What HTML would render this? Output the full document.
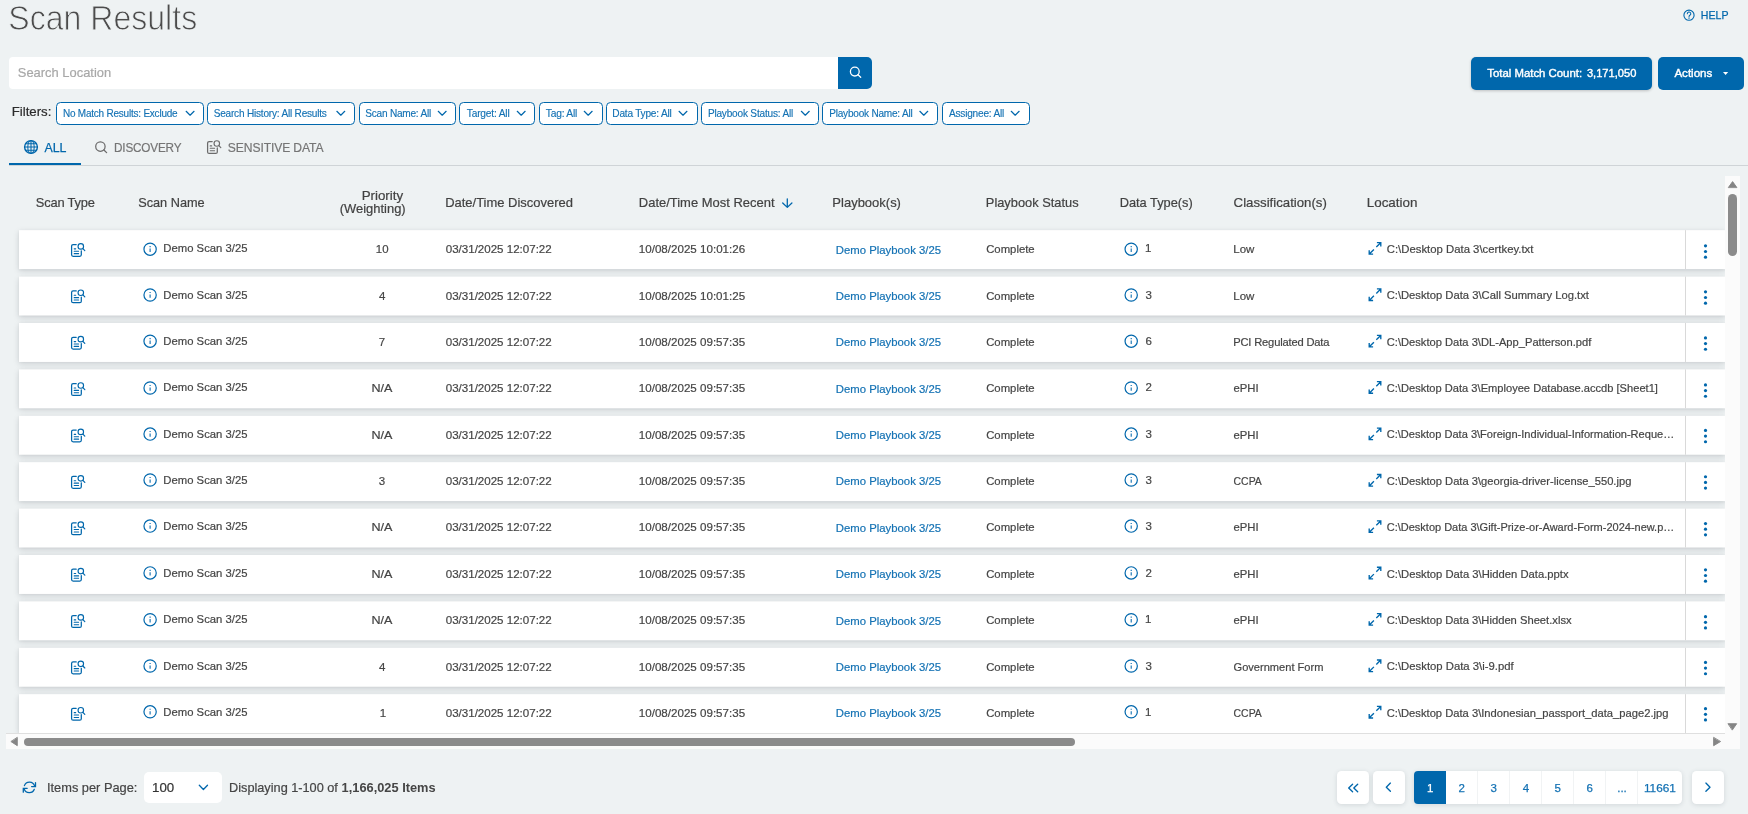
<!DOCTYPE html>
<html lang="en"><head><meta charset="utf-8"><title>Scan Results</title>
<style>
html,body{margin:0;padding:0;background:#eef2f3;}
body{width:1748px;height:814px;overflow:hidden;font-family:"Liberation Sans",sans-serif;color:#454545;}
#app{will-change:transform;position:relative;width:1748px;height:814px;overflow:hidden;background:#eef2f3;}
#app>*{position:absolute;box-sizing:border-box;}
.t{white-space:pre;line-height:20px;height:20px;transform-origin:0 50%;-webkit-text-stroke:0.2px currentColor;}
.row{background:#fff;box-shadow:0 2px 6px rgba(20,30,40,.15),0 0.5px 2px rgba(20,30,40,.06);}
.row>i{position:absolute;left:1666px;top:0;bottom:0;width:1px;background:#d9d9d9;}
.chip{border:1px solid #0067ac;border-radius:4.5px;background:#fff;}
.btn{background:#0067ac;border-radius:5px;}
.sh{box-shadow:0 1px 3px rgba(0,0,0,.2);}
.pg{background:#fff;border-radius:4.5px;box-shadow:0 1px 5px rgba(40,60,70,.14);}
svg{position:absolute;overflow:visible;}
.light{-webkit-text-stroke:0.9px #eef2f3;}
.med{-webkit-text-stroke:0.25px currentColor;}
.medw{-webkit-text-stroke:0.38px currentColor;}
.chipt{-webkit-text-stroke:0.15px currentColor;}
.ns{-webkit-text-stroke:0;}

</style></head>
<body>
<div id="app">
<div style="left:9px;top:57px;width:829px;height:32px;background:#fff;border-radius:4px 0 0 4px;"></div>
<div style="left:838px;top:57px;width:34px;height:32px;background:#0067ac;border-radius:0 5px 5px 0;"></div>
<div class="btn sh" style="left:1471px;top:57px;width:181px;height:33px;"></div>
<div class="btn" style="left:1658px;top:57px;width:86px;height:33px;"></div>
<div class="chip" style="left:56px;top:102px;width:148px;height:23px;"></div>
<div class="chip" style="left:207px;top:102px;width:147.5px;height:23px;"></div>
<div class="chip" style="left:359px;top:102px;width:97px;height:23px;"></div>
<div class="chip" style="left:459px;top:102px;width:76px;height:23px;"></div>
<div class="chip" style="left:539px;top:102px;width:64px;height:23px;"></div>
<div class="chip" style="left:606px;top:102px;width:92px;height:23px;"></div>
<div class="chip" style="left:701px;top:102px;width:118px;height:23px;"></div>
<div class="chip" style="left:822px;top:102px;width:116px;height:23px;"></div>
<div class="chip" style="left:941.5px;top:102px;width:88.5px;height:23px;"></div>
<div style="left:9px;top:165px;width:1739px;height:1px;background:#cfd4d7;"></div>
<div style="left:9px;top:163px;width:72px;height:2.4px;background:#0067ac;"></div>
<div style="left:1725px;top:176px;width:15px;height:573px;background:#fbfbfb;"></div>
<div style="left:6px;top:733.6px;width:1734px;height:15.4px;background:#fbfbfb;"></div>
<div style="left:6px;top:176px;width:1719px;height:557.5px;overflow:hidden;">
<div class="row" style="position:absolute;left:13px;top:0;width:1706px;height:38.7px;transform:translateY(54.15px);"><i></i></div>
<div class="row" style="position:absolute;left:13px;top:0;width:1706px;height:38.7px;transform:translateY(100.55px);"><i></i></div>
<div class="row" style="position:absolute;left:13px;top:0;width:1706px;height:38.7px;transform:translateY(146.95px);"><i></i></div>
<div class="row" style="position:absolute;left:13px;top:0;width:1706px;height:38.7px;transform:translateY(193.35px);"><i></i></div>
<div class="row" style="position:absolute;left:13px;top:0;width:1706px;height:38.7px;transform:translateY(239.75px);"><i></i></div>
<div class="row" style="position:absolute;left:13px;top:0;width:1706px;height:38.7px;transform:translateY(286.15px);"><i></i></div>
<div class="row" style="position:absolute;left:13px;top:0;width:1706px;height:38.7px;transform:translateY(332.55px);"><i></i></div>
<div class="row" style="position:absolute;left:13px;top:0;width:1706px;height:38.7px;transform:translateY(378.95px);"><i></i></div>
<div class="row" style="position:absolute;left:13px;top:0;width:1706px;height:38.7px;transform:translateY(425.35px);"><i></i></div>
<div class="row" style="position:absolute;left:13px;top:0;width:1706px;height:38.7px;transform:translateY(471.75px);"><i></i></div>
<div class="row" style="position:absolute;left:13px;top:0;width:1706px;height:38.7px;transform:translateY(518.15px);"><i></i></div>
</div>
<div style="left:6px;top:733px;width:1719px;height:1px;background:#dfdfdf;"></div>
<div style="left:1728px;top:194px;width:9px;height:62.2px;background:#8b8b8b;border-radius:4.5px;"></div>
<div style="left:24px;top:737.5px;width:1051px;height:8.5px;background:#8b8b8b;border-radius:4.5px;"></div>
<div style="left:144px;top:772px;width:78px;height:31px;background:#fff;border-radius:5px;"></div>
<div class="pg" style="left:1337px;top:771px;width:32px;height:33px;"></div>
<div class="pg" style="left:1373px;top:771px;width:32px;height:33px;"></div>
<div class="pg" style="left:1414px;top:771px;width:268.3px;height:33px;"></div>
<div style="left:1414px;top:771px;width:32px;height:33px;background:#0067ac;border-radius:4px 0 0 4px;"></div>
<div style="left:1477px;top:771px;width:1px;height:33px;background:#f1f3f4;"></div>
<div style="left:1509px;top:771px;width:1px;height:33px;background:#f1f3f4;"></div>
<div style="left:1541px;top:771px;width:1px;height:33px;background:#f1f3f4;"></div>
<div style="left:1573px;top:771px;width:1px;height:33px;background:#f1f3f4;"></div>
<div style="left:1605px;top:771px;width:1px;height:33px;background:#f1f3f4;"></div>
<div style="left:1637px;top:771px;width:1px;height:33px;background:#f1f3f4;"></div>
<div class="pg" style="left:1692px;top:771px;width:32px;height:33px;"></div>
<svg style="left:0;top:0" width="1748" height="814" viewBox="0 0 1748 814" fill="none" stroke-linecap="round" stroke-linejoin="round"><circle cx="1689.0" cy="15.2" r="5.1" stroke="#0067ac" stroke-width="1.1" fill="none"/>
<path d="M1687.3 13.7 a1.75 1.75 0 1 1 2.6 1.5 q-0.85 0.5 -0.85 1.4" stroke="#0067ac" stroke-width="1.05" />
<path d="M1688.4 17.6 h1.2 v1.2 h-1.2z" fill="#0067ac" stroke="none"/>
<circle cx="854.8" cy="71.6" r="4.4" stroke="#fff" stroke-width="1.3" fill="none"/>
<path d="M858.0 74.8 L860.6999999999999 77.3" stroke="#fff" stroke-width="1.3" />
<path d="M1723.0 72.1 h5.2 l-2.6 3.0z" fill="#fff" stroke="none"/>
<path d="M186.15 111.3 L190.10 115.2 L194.05 111.3" stroke="#0067ac" stroke-width="1.2" />
<path d="M336.85 111.3 L340.80 115.2 L344.75 111.3" stroke="#0067ac" stroke-width="1.2" />
<path d="M438.25 111.3 L442.20 115.2 L446.15 111.3" stroke="#0067ac" stroke-width="1.2" />
<path d="M517.25 111.3 L521.20 115.2 L525.15 111.3" stroke="#0067ac" stroke-width="1.2" />
<path d="M584.25 111.3 L588.20 115.2 L592.15 111.3" stroke="#0067ac" stroke-width="1.2" />
<path d="M679.05 111.3 L683.00 115.2 L686.95 111.3" stroke="#0067ac" stroke-width="1.2" />
<path d="M801.35 111.3 L805.30 115.2 L809.25 111.3" stroke="#0067ac" stroke-width="1.2" />
<path d="M919.85 111.3 L923.80 115.2 L927.75 111.3" stroke="#0067ac" stroke-width="1.2" />
<path d="M1011.25 111.3 L1015.20 115.2 L1019.15 111.3" stroke="#0067ac" stroke-width="1.2" />
<circle cx="31.0" cy="147.0" r="6.4" stroke="#0067ac" stroke-width="1.4" fill="none"/>
<path d="M31.0 140.7 V153.3 M24.7 147.0 H37.3 M25.5 143.8 H36.5 M25.5 150.2 H36.5" stroke="#0067ac" stroke-width="1.05" />
<ellipse cx="31.0" cy="147.0" rx="3.2" ry="6.3" stroke="#0067ac" stroke-width="1.05"/>
<circle cx="100.4" cy="146.6" r="4.7" stroke="#6b6b6b" stroke-width="1.25" fill="none"/>
<path d="M103.9 150.0 L106.6 152.6" stroke="#6b6b6b" stroke-width="1.3" />
<path d="M212.20 141.60 H209.10 Q207.60 141.60 207.60 143.10 V151.90 Q207.60 153.40 209.10 153.40 H215.80 Q217.30 153.40 217.30 151.90 V147.90" stroke="#6b6b6b" stroke-width="1.25" />
<path d="M210.20 145.90 H211.70 M210.20 148.30 H214.60 M210.20 150.70 H214.60" stroke="#6b6b6b" stroke-width="1.1" />
<circle cx="216.8" cy="143.45" r="2.75" stroke="#6b6b6b" stroke-width="1.15" fill="none"/>
<path d="M218.90 145.60 L220.80 147.60" stroke="#6b6b6b" stroke-width="1.2" />
<path d="M787.3 198.8 V207.2 M782.7 203.0 L787.3 207.4 L791.9 203.0" stroke="#0067ac" stroke-width="1.3" />
<path d="M76.20 244.55 H73.10 Q71.60 244.55 71.60 246.05 V254.85 Q71.60 256.35 73.10 256.35 H79.80 Q81.30 256.35 81.30 254.85 V250.85" stroke="#0067ac" stroke-width="1.25" />
<path d="M74.20 248.85 H75.70 M74.20 251.25 H78.60 M74.20 253.65 H78.60" stroke="#0067ac" stroke-width="1.1" />
<circle cx="80.8" cy="246.4" r="2.75" stroke="#0067ac" stroke-width="1.15" fill="none"/>
<path d="M82.90 248.55 L84.80 250.55" stroke="#0067ac" stroke-width="1.2" />
<circle cx="150.1" cy="249.2" r="6.15" stroke="#0067ac" stroke-width="1.2" fill="none"/>
<path d="M150.1 248.60 V251.90" stroke="#0067ac" stroke-width="1.05" stroke-linecap="butt"/>
<path d="M149.54999999999998 246.10 h1.1 v1.1 h-1.1z" fill="#0067ac" stroke="none"/>
<circle cx="1131.2" cy="249.2" r="6.15" stroke="#0067ac" stroke-width="1.2" fill="none"/>
<path d="M1131.2 248.60 V251.90" stroke="#0067ac" stroke-width="1.05" stroke-linecap="butt"/>
<path d="M1130.65 246.10 h1.1 v1.1 h-1.1z" fill="#0067ac" stroke="none"/>
<path d="M1376.3 247.05 L1380.7 242.65 M1376.9 242.55 H1380.8 V246.45" stroke="#0067ac" stroke-width="1.35" stroke-linecap="butt" stroke-linejoin="miter"/>
<path d="M1373.9 249.45 L1369.3 254.05 M1369.2 250.25 V254.15 H1373.1" stroke="#0067ac" stroke-width="1.35" stroke-linecap="butt" stroke-linejoin="miter"/>
<circle cx="1705.5" cy="245.85" r="1.6" fill="#0067ac"/>
<circle cx="1705.5" cy="251.50" r="1.6" fill="#0067ac"/>
<circle cx="1705.5" cy="257.15" r="1.6" fill="#0067ac"/>
<path d="M76.20 290.93 H73.10 Q71.60 290.93 71.60 292.43 V301.23 Q71.60 302.73 73.10 302.73 H79.80 Q81.30 302.73 81.30 301.23 V297.23" stroke="#0067ac" stroke-width="1.25" />
<path d="M74.20 295.23 H75.70 M74.20 297.63 H78.60 M74.20 300.03 H78.60" stroke="#0067ac" stroke-width="1.1" />
<circle cx="80.8" cy="292.78" r="2.75" stroke="#0067ac" stroke-width="1.15" fill="none"/>
<path d="M82.90 294.93 L84.80 296.93" stroke="#0067ac" stroke-width="1.2" />
<circle cx="150.1" cy="295.0" r="6.15" stroke="#0067ac" stroke-width="1.2" fill="none"/>
<path d="M150.1 294.40 V297.70" stroke="#0067ac" stroke-width="1.05" stroke-linecap="butt"/>
<path d="M149.54999999999998 291.90 h1.1 v1.1 h-1.1z" fill="#0067ac" stroke="none"/>
<circle cx="1131.2" cy="295.0" r="6.15" stroke="#0067ac" stroke-width="1.2" fill="none"/>
<path d="M1131.2 294.40 V297.70" stroke="#0067ac" stroke-width="1.05" stroke-linecap="butt"/>
<path d="M1130.65 291.90 h1.1 v1.1 h-1.1z" fill="#0067ac" stroke="none"/>
<path d="M1376.3 293.43 L1380.7 289.03 M1376.9 288.93 H1380.8 V292.83" stroke="#0067ac" stroke-width="1.35" stroke-linecap="butt" stroke-linejoin="miter"/>
<path d="M1373.9 295.83 L1369.3 300.43 M1369.2 296.63 V300.53 H1373.1" stroke="#0067ac" stroke-width="1.35" stroke-linecap="butt" stroke-linejoin="miter"/>
<circle cx="1705.5" cy="291.85" r="1.6" fill="#0067ac"/>
<circle cx="1705.5" cy="297.50" r="1.6" fill="#0067ac"/>
<circle cx="1705.5" cy="303.15" r="1.6" fill="#0067ac"/>
<path d="M76.20 337.31 H73.10 Q71.60 337.31 71.60 338.81 V347.61 Q71.60 349.11 73.10 349.11 H79.80 Q81.30 349.11 81.30 347.61 V343.61" stroke="#0067ac" stroke-width="1.25" />
<path d="M74.20 341.61 H75.70 M74.20 344.01 H78.60 M74.20 346.41 H78.60" stroke="#0067ac" stroke-width="1.1" />
<circle cx="80.8" cy="339.16" r="2.75" stroke="#0067ac" stroke-width="1.15" fill="none"/>
<path d="M82.90 341.31 L84.80 343.31" stroke="#0067ac" stroke-width="1.2" />
<circle cx="150.1" cy="341.2" r="6.15" stroke="#0067ac" stroke-width="1.2" fill="none"/>
<path d="M150.1 340.60 V343.90" stroke="#0067ac" stroke-width="1.05" stroke-linecap="butt"/>
<path d="M149.54999999999998 338.10 h1.1 v1.1 h-1.1z" fill="#0067ac" stroke="none"/>
<circle cx="1131.2" cy="341.2" r="6.15" stroke="#0067ac" stroke-width="1.2" fill="none"/>
<path d="M1131.2 340.60 V343.90" stroke="#0067ac" stroke-width="1.05" stroke-linecap="butt"/>
<path d="M1130.65 338.10 h1.1 v1.1 h-1.1z" fill="#0067ac" stroke="none"/>
<path d="M1376.3 339.81 L1380.7 335.41 M1376.9 335.31 H1380.8 V339.21" stroke="#0067ac" stroke-width="1.35" stroke-linecap="butt" stroke-linejoin="miter"/>
<path d="M1373.9 342.21 L1369.3 346.81 M1369.2 343.01 V346.91 H1373.1" stroke="#0067ac" stroke-width="1.35" stroke-linecap="butt" stroke-linejoin="miter"/>
<circle cx="1705.5" cy="337.95" r="1.6" fill="#0067ac"/>
<circle cx="1705.5" cy="343.60" r="1.6" fill="#0067ac"/>
<circle cx="1705.5" cy="349.25" r="1.6" fill="#0067ac"/>
<path d="M76.20 383.69 H73.10 Q71.60 383.69 71.60 385.19 V393.99 Q71.60 395.49 73.10 395.49 H79.80 Q81.30 395.49 81.30 393.99 V389.99" stroke="#0067ac" stroke-width="1.25" />
<path d="M74.20 387.99 H75.70 M74.20 390.39 H78.60 M74.20 392.79 H78.60" stroke="#0067ac" stroke-width="1.1" />
<circle cx="80.8" cy="385.54" r="2.75" stroke="#0067ac" stroke-width="1.15" fill="none"/>
<path d="M82.90 387.69 L84.80 389.69" stroke="#0067ac" stroke-width="1.2" />
<circle cx="150.1" cy="388.0" r="6.15" stroke="#0067ac" stroke-width="1.2" fill="none"/>
<path d="M150.1 387.40 V390.70" stroke="#0067ac" stroke-width="1.05" stroke-linecap="butt"/>
<path d="M149.54999999999998 384.90 h1.1 v1.1 h-1.1z" fill="#0067ac" stroke="none"/>
<circle cx="1131.2" cy="388.0" r="6.15" stroke="#0067ac" stroke-width="1.2" fill="none"/>
<path d="M1131.2 387.40 V390.70" stroke="#0067ac" stroke-width="1.05" stroke-linecap="butt"/>
<path d="M1130.65 384.90 h1.1 v1.1 h-1.1z" fill="#0067ac" stroke="none"/>
<path d="M1376.3 386.19 L1380.7 381.79 M1376.9 381.69 H1380.8 V385.59" stroke="#0067ac" stroke-width="1.35" stroke-linecap="butt" stroke-linejoin="miter"/>
<path d="M1373.9 388.59 L1369.3 393.19 M1369.2 389.39 V393.29 H1373.1" stroke="#0067ac" stroke-width="1.35" stroke-linecap="butt" stroke-linejoin="miter"/>
<circle cx="1705.5" cy="384.95" r="1.6" fill="#0067ac"/>
<circle cx="1705.5" cy="390.60" r="1.6" fill="#0067ac"/>
<circle cx="1705.5" cy="396.25" r="1.6" fill="#0067ac"/>
<path d="M76.20 430.07 H73.10 Q71.60 430.07 71.60 431.57 V440.37 Q71.60 441.87 73.10 441.87 H79.80 Q81.30 441.87 81.30 440.37 V436.37" stroke="#0067ac" stroke-width="1.25" />
<path d="M74.20 434.37 H75.70 M74.20 436.77 H78.60 M74.20 439.17 H78.60" stroke="#0067ac" stroke-width="1.1" />
<circle cx="80.8" cy="431.92" r="2.75" stroke="#0067ac" stroke-width="1.15" fill="none"/>
<path d="M82.90 434.07 L84.80 436.07" stroke="#0067ac" stroke-width="1.2" />
<circle cx="150.1" cy="434.1" r="6.15" stroke="#0067ac" stroke-width="1.2" fill="none"/>
<path d="M150.1 433.50 V436.80" stroke="#0067ac" stroke-width="1.05" stroke-linecap="butt"/>
<path d="M149.54999999999998 431.00 h1.1 v1.1 h-1.1z" fill="#0067ac" stroke="none"/>
<circle cx="1131.2" cy="434.1" r="6.15" stroke="#0067ac" stroke-width="1.2" fill="none"/>
<path d="M1131.2 433.50 V436.80" stroke="#0067ac" stroke-width="1.05" stroke-linecap="butt"/>
<path d="M1130.65 431.00 h1.1 v1.1 h-1.1z" fill="#0067ac" stroke="none"/>
<path d="M1376.3 432.57 L1380.7 428.17 M1376.9 428.07 H1380.8 V431.97" stroke="#0067ac" stroke-width="1.35" stroke-linecap="butt" stroke-linejoin="miter"/>
<path d="M1373.9 434.97 L1369.3 439.57 M1369.2 435.77 V439.67 H1373.1" stroke="#0067ac" stroke-width="1.35" stroke-linecap="butt" stroke-linejoin="miter"/>
<circle cx="1705.5" cy="430.45" r="1.6" fill="#0067ac"/>
<circle cx="1705.5" cy="436.10" r="1.6" fill="#0067ac"/>
<circle cx="1705.5" cy="441.75" r="1.6" fill="#0067ac"/>
<path d="M76.20 476.45 H73.10 Q71.60 476.45 71.60 477.95 V486.75 Q71.60 488.25 73.10 488.25 H79.80 Q81.30 488.25 81.30 486.75 V482.75" stroke="#0067ac" stroke-width="1.25" />
<path d="M74.20 480.75 H75.70 M74.20 483.15 H78.60 M74.20 485.55 H78.60" stroke="#0067ac" stroke-width="1.1" />
<circle cx="80.8" cy="478.3" r="2.75" stroke="#0067ac" stroke-width="1.15" fill="none"/>
<path d="M82.90 480.45 L84.80 482.45" stroke="#0067ac" stroke-width="1.2" />
<circle cx="150.1" cy="480.0" r="6.15" stroke="#0067ac" stroke-width="1.2" fill="none"/>
<path d="M150.1 479.40 V482.70" stroke="#0067ac" stroke-width="1.05" stroke-linecap="butt"/>
<path d="M149.54999999999998 476.90 h1.1 v1.1 h-1.1z" fill="#0067ac" stroke="none"/>
<circle cx="1131.2" cy="480.0" r="6.15" stroke="#0067ac" stroke-width="1.2" fill="none"/>
<path d="M1131.2 479.40 V482.70" stroke="#0067ac" stroke-width="1.05" stroke-linecap="butt"/>
<path d="M1130.65 476.90 h1.1 v1.1 h-1.1z" fill="#0067ac" stroke="none"/>
<path d="M1376.3 478.95 L1380.7 474.55 M1376.9 474.45 H1380.8 V478.35" stroke="#0067ac" stroke-width="1.35" stroke-linecap="butt" stroke-linejoin="miter"/>
<path d="M1373.9 481.35 L1369.3 485.95 M1369.2 482.15 V486.05 H1373.1" stroke="#0067ac" stroke-width="1.35" stroke-linecap="butt" stroke-linejoin="miter"/>
<circle cx="1705.5" cy="476.75" r="1.6" fill="#0067ac"/>
<circle cx="1705.5" cy="482.40" r="1.6" fill="#0067ac"/>
<circle cx="1705.5" cy="488.05" r="1.6" fill="#0067ac"/>
<path d="M76.20 522.83 H73.10 Q71.60 522.83 71.60 524.33 V533.13 Q71.60 534.63 73.10 534.63 H79.80 Q81.30 534.63 81.30 533.13 V529.13" stroke="#0067ac" stroke-width="1.25" />
<path d="M74.20 527.13 H75.70 M74.20 529.53 H78.60 M74.20 531.93 H78.60" stroke="#0067ac" stroke-width="1.1" />
<circle cx="80.8" cy="524.68" r="2.75" stroke="#0067ac" stroke-width="1.15" fill="none"/>
<path d="M82.90 526.83 L84.80 528.83" stroke="#0067ac" stroke-width="1.2" />
<circle cx="150.1" cy="526.1" r="6.15" stroke="#0067ac" stroke-width="1.2" fill="none"/>
<path d="M150.1 525.50 V528.80" stroke="#0067ac" stroke-width="1.05" stroke-linecap="butt"/>
<path d="M149.54999999999998 523.00 h1.1 v1.1 h-1.1z" fill="#0067ac" stroke="none"/>
<circle cx="1131.2" cy="526.1" r="6.15" stroke="#0067ac" stroke-width="1.2" fill="none"/>
<path d="M1131.2 525.50 V528.80" stroke="#0067ac" stroke-width="1.05" stroke-linecap="butt"/>
<path d="M1130.65 523.00 h1.1 v1.1 h-1.1z" fill="#0067ac" stroke="none"/>
<path d="M1376.3 525.33 L1380.7 520.93 M1376.9 520.83 H1380.8 V524.73" stroke="#0067ac" stroke-width="1.35" stroke-linecap="butt" stroke-linejoin="miter"/>
<path d="M1373.9 527.73 L1369.3 532.33 M1369.2 528.53 V532.43 H1373.1" stroke="#0067ac" stroke-width="1.35" stroke-linecap="butt" stroke-linejoin="miter"/>
<circle cx="1705.5" cy="523.55" r="1.6" fill="#0067ac"/>
<circle cx="1705.5" cy="529.20" r="1.6" fill="#0067ac"/>
<circle cx="1705.5" cy="534.85" r="1.6" fill="#0067ac"/>
<path d="M76.20 569.21 H73.10 Q71.60 569.21 71.60 570.71 V579.51 Q71.60 581.01 73.10 581.01 H79.80 Q81.30 581.01 81.30 579.51 V575.51" stroke="#0067ac" stroke-width="1.25" />
<path d="M74.20 573.51 H75.70 M74.20 575.91 H78.60 M74.20 578.31 H78.60" stroke="#0067ac" stroke-width="1.1" />
<circle cx="80.8" cy="571.06" r="2.75" stroke="#0067ac" stroke-width="1.15" fill="none"/>
<path d="M82.90 573.21 L84.80 575.21" stroke="#0067ac" stroke-width="1.2" />
<circle cx="150.1" cy="572.9" r="6.15" stroke="#0067ac" stroke-width="1.2" fill="none"/>
<path d="M150.1 572.30 V575.60" stroke="#0067ac" stroke-width="1.05" stroke-linecap="butt"/>
<path d="M149.54999999999998 569.80 h1.1 v1.1 h-1.1z" fill="#0067ac" stroke="none"/>
<circle cx="1131.2" cy="572.9" r="6.15" stroke="#0067ac" stroke-width="1.2" fill="none"/>
<path d="M1131.2 572.30 V575.60" stroke="#0067ac" stroke-width="1.05" stroke-linecap="butt"/>
<path d="M1130.65 569.80 h1.1 v1.1 h-1.1z" fill="#0067ac" stroke="none"/>
<path d="M1376.3 571.71 L1380.7 567.31 M1376.9 567.21 H1380.8 V571.11" stroke="#0067ac" stroke-width="1.35" stroke-linecap="butt" stroke-linejoin="miter"/>
<path d="M1373.9 574.11 L1369.3 578.71 M1369.2 574.91 V578.81 H1373.1" stroke="#0067ac" stroke-width="1.35" stroke-linecap="butt" stroke-linejoin="miter"/>
<circle cx="1705.5" cy="569.85" r="1.6" fill="#0067ac"/>
<circle cx="1705.5" cy="575.50" r="1.6" fill="#0067ac"/>
<circle cx="1705.5" cy="581.15" r="1.6" fill="#0067ac"/>
<path d="M76.20 615.59 H73.10 Q71.60 615.59 71.60 617.09 V625.89 Q71.60 627.39 73.10 627.39 H79.80 Q81.30 627.39 81.30 625.89 V621.89" stroke="#0067ac" stroke-width="1.25" />
<path d="M74.20 619.89 H75.70 M74.20 622.29 H78.60 M74.20 624.69 H78.60" stroke="#0067ac" stroke-width="1.1" />
<circle cx="80.8" cy="617.44" r="2.75" stroke="#0067ac" stroke-width="1.15" fill="none"/>
<path d="M82.90 619.59 L84.80 621.59" stroke="#0067ac" stroke-width="1.2" />
<circle cx="150.1" cy="619.7" r="6.15" stroke="#0067ac" stroke-width="1.2" fill="none"/>
<path d="M150.1 619.10 V622.40" stroke="#0067ac" stroke-width="1.05" stroke-linecap="butt"/>
<path d="M149.54999999999998 616.60 h1.1 v1.1 h-1.1z" fill="#0067ac" stroke="none"/>
<circle cx="1131.2" cy="619.7" r="6.15" stroke="#0067ac" stroke-width="1.2" fill="none"/>
<path d="M1131.2 619.10 V622.40" stroke="#0067ac" stroke-width="1.05" stroke-linecap="butt"/>
<path d="M1130.65 616.60 h1.1 v1.1 h-1.1z" fill="#0067ac" stroke="none"/>
<path d="M1376.3 618.09 L1380.7 613.69 M1376.9 613.59 H1380.8 V617.49" stroke="#0067ac" stroke-width="1.35" stroke-linecap="butt" stroke-linejoin="miter"/>
<path d="M1373.9 620.49 L1369.3 625.09 M1369.2 621.29 V625.19 H1373.1" stroke="#0067ac" stroke-width="1.35" stroke-linecap="butt" stroke-linejoin="miter"/>
<circle cx="1705.5" cy="616.65" r="1.6" fill="#0067ac"/>
<circle cx="1705.5" cy="622.30" r="1.6" fill="#0067ac"/>
<circle cx="1705.5" cy="627.95" r="1.6" fill="#0067ac"/>
<path d="M76.20 661.97 H73.10 Q71.60 661.97 71.60 663.47 V672.27 Q71.60 673.77 73.10 673.77 H79.80 Q81.30 673.77 81.30 672.27 V668.27" stroke="#0067ac" stroke-width="1.25" />
<path d="M74.20 666.27 H75.70 M74.20 668.67 H78.60 M74.20 671.07 H78.60" stroke="#0067ac" stroke-width="1.1" />
<circle cx="80.8" cy="663.82" r="2.75" stroke="#0067ac" stroke-width="1.15" fill="none"/>
<path d="M82.90 665.97 L84.80 667.97" stroke="#0067ac" stroke-width="1.2" />
<circle cx="150.1" cy="666.0" r="6.15" stroke="#0067ac" stroke-width="1.2" fill="none"/>
<path d="M150.1 665.40 V668.70" stroke="#0067ac" stroke-width="1.05" stroke-linecap="butt"/>
<path d="M149.54999999999998 662.90 h1.1 v1.1 h-1.1z" fill="#0067ac" stroke="none"/>
<circle cx="1131.2" cy="666.0" r="6.15" stroke="#0067ac" stroke-width="1.2" fill="none"/>
<path d="M1131.2 665.40 V668.70" stroke="#0067ac" stroke-width="1.05" stroke-linecap="butt"/>
<path d="M1130.65 662.90 h1.1 v1.1 h-1.1z" fill="#0067ac" stroke="none"/>
<path d="M1376.3 664.47 L1380.7 660.07 M1376.9 659.97 H1380.8 V663.87" stroke="#0067ac" stroke-width="1.35" stroke-linecap="butt" stroke-linejoin="miter"/>
<path d="M1373.9 666.87 L1369.3 671.47 M1369.2 667.67 V671.57 H1373.1" stroke="#0067ac" stroke-width="1.35" stroke-linecap="butt" stroke-linejoin="miter"/>
<circle cx="1705.5" cy="662.45" r="1.6" fill="#0067ac"/>
<circle cx="1705.5" cy="668.10" r="1.6" fill="#0067ac"/>
<circle cx="1705.5" cy="673.75" r="1.6" fill="#0067ac"/>
<path d="M76.20 708.35 H73.10 Q71.60 708.35 71.60 709.85 V718.65 Q71.60 720.15 73.10 720.15 H79.80 Q81.30 720.15 81.30 718.65 V714.65" stroke="#0067ac" stroke-width="1.25" />
<path d="M74.20 712.65 H75.70 M74.20 715.05 H78.60 M74.20 717.45 H78.60" stroke="#0067ac" stroke-width="1.1" />
<circle cx="80.8" cy="710.2" r="2.75" stroke="#0067ac" stroke-width="1.15" fill="none"/>
<path d="M82.90 712.35 L84.80 714.35" stroke="#0067ac" stroke-width="1.2" />
<circle cx="150.1" cy="711.8" r="6.15" stroke="#0067ac" stroke-width="1.2" fill="none"/>
<path d="M150.1 711.20 V714.50" stroke="#0067ac" stroke-width="1.05" stroke-linecap="butt"/>
<path d="M149.54999999999998 708.70 h1.1 v1.1 h-1.1z" fill="#0067ac" stroke="none"/>
<circle cx="1131.2" cy="711.8" r="6.15" stroke="#0067ac" stroke-width="1.2" fill="none"/>
<path d="M1131.2 711.20 V714.50" stroke="#0067ac" stroke-width="1.05" stroke-linecap="butt"/>
<path d="M1130.65 708.70 h1.1 v1.1 h-1.1z" fill="#0067ac" stroke="none"/>
<path d="M1376.3 710.85 L1380.7 706.45 M1376.9 706.35 H1380.8 V710.25" stroke="#0067ac" stroke-width="1.35" stroke-linecap="butt" stroke-linejoin="miter"/>
<path d="M1373.9 713.25 L1369.3 717.85 M1369.2 714.05 V717.95 H1373.1" stroke="#0067ac" stroke-width="1.35" stroke-linecap="butt" stroke-linejoin="miter"/>
<circle cx="1705.5" cy="708.65" r="1.6" fill="#0067ac"/>
<circle cx="1705.5" cy="714.30" r="1.6" fill="#0067ac"/>
<circle cx="1705.5" cy="719.95" r="1.6" fill="#0067ac"/>
<path d="M1728.5 187.3 L1732.6 181.6 L1736.7 187.3z" fill="#858585" stroke="#858585" stroke-width="0.9" stroke-linejoin="round"/>
<path d="M1728.3 723.7 L1736.7 723.7 L1732.5 729.8z" fill="#858585" stroke="#858585" stroke-width="0.9" stroke-linejoin="round"/>
<path d="M17.3 737.7 V745.7 L11.2 741.7z" fill="#858585" stroke="#858585" stroke-width="0.9" stroke-linejoin="round"/>
<path d="M1713.6 737.7 V745.7 L1720.3 741.7z" fill="#858585" stroke="#858585" stroke-width="0.9" stroke-linejoin="round"/>
<path d="M24.4 785.6 A5.35 5.35 0 0 1 34.6 785.9" stroke="#0067ac" stroke-width="1.25" />
<path d="M35.5 782.6 V786.6 H31.6" stroke="#0067ac" stroke-width="1.3" stroke-linejoin="miter"/>
<path d="M34.3 789.3 A5.35 5.35 0 0 1 24.2 789.0" stroke="#0067ac" stroke-width="1.25" />
<path d="M23.3 792.2 V788.3 H27.2" stroke="#0067ac" stroke-width="1.3" stroke-linejoin="miter"/>
<path d="M199.3 785.3 L203.4 789.5 L207.5 785.3" stroke="#0067ac" stroke-width="1.3" />
<path d="M1352.6 784.2 L1348.7 788.0 L1352.6 791.8 M1357.7 784.2 L1353.8 788.0 L1357.7 791.8" stroke="#0067ac" stroke-width="1.35" />
<path d="M1390.4 783.1 L1386.3 787.2 L1390.4 791.3" stroke="#0067ac" stroke-width="1.35" />
<path d="M1705.9 783.1 L1710.0 787.2 L1705.9 791.3" stroke="#0067ac" stroke-width="1.35" /></svg>
<span class="t light" style="left:8px;top:8.46px;font-size:35.6px;transform:translateX(0.37px) scaleX(0.9006);color:#4c4c4c;">Scan Results</span>
<span class="t med" style="left:1700px;top:4.92px;font-size:11.5px;transform:translateX(0.86px) scaleX(0.9191);color:#0067ac;">HELP</span>
<span class="t" style="left:17px;top:62.70px;font-size:13px;transform:translateX(0.81px) scaleX(0.9935);color:#a8a8a8;">Search Location</span>
<span class="t medw" style="left:1487px;top:63.49px;font-size:11.0px;transform:translateX(0.31px) scaleX(1.0331);color:#ffffff;">Total Match Count:</span>
<span class="t medw" style="left:1586px;top:63.49px;font-size:11.0px;transform:translateX(0.91px) scaleX(1.0102);color:#ffffff;">3,171,050</span>
<span class="t medw" style="left:1674px;top:63.49px;font-size:11.0px;transform:translateX(0.39px) scaleX(1.0519);color:#ffffff;">Actions</span>
<span class="t" style="left:11px;top:101.60px;font-size:13px;transform:translateX(0.70px) scaleX(1.0174);color:#2c2c2c;">Filters:</span>
<span class="t chipt" style="left:62px;top:104.23px;font-size:10.3px;letter-spacing:-0.22px;transform:translateX(0.90px) scaleX(0.9695);color:#1472b4;">No Match Results: Exclude</span>
<span class="t chipt" style="left:213px;top:104.23px;font-size:10.3px;letter-spacing:-0.20px;transform:translateX(0.66px) scaleX(0.9752);color:#1472b4;">Search History: All Results</span>
<span class="t chipt" style="left:365px;top:104.23px;font-size:10.3px;letter-spacing:-0.25px;transform:translateX(0.31px) scaleX(0.9805);color:#1472b4;">Scan Name: All</span>
<span class="t chipt" style="left:466px;top:104.23px;font-size:10.3px;letter-spacing:-0.18px;transform:translateX(0.73px) scaleX(0.9894);color:#1472b4;">Target: All</span>
<span class="t chipt" style="left:545px;top:104.23px;font-size:10.3px;letter-spacing:-0.21px;transform:translateX(0.71px) scaleX(0.9965);color:#1472b4;">Tag: All</span>
<span class="t chipt" style="left:612px;top:104.23px;font-size:10.3px;letter-spacing:-0.23px;transform:translateX(0.30px) scaleX(0.9842);color:#1472b4;">Data Type: All</span>
<span class="t chipt" style="left:707px;top:104.23px;font-size:10.3px;letter-spacing:-0.20px;transform:translateX(0.90px) scaleX(0.9779);color:#1472b4;">Playbook Status: All</span>
<span class="t chipt" style="left:829px;top:104.23px;font-size:10.3px;letter-spacing:-0.23px;transform:translateX(0.24px) scaleX(0.9770);color:#1472b4;">Playbook Name: All</span>
<span class="t chipt" style="left:948px;top:104.23px;font-size:10.3px;letter-spacing:-0.21px;transform:translateX(0.95px) scaleX(0.9791);color:#1472b4;">Assignee: All</span>
<span class="t med" style="left:44px;top:137.50px;font-size:13px;transform:translateX(0.49px) scaleX(0.9512);color:#0067ac;">ALL</span>
<span class="t" style="left:113px;top:137.50px;font-size:13px;letter-spacing:-0.20px;transform:translateX(1.00px) scaleX(0.9031);color:#757575;">DISCOVERY</span>
<span class="t" style="left:227px;top:137.50px;font-size:13px;letter-spacing:-0.12px;transform:translateX(0.85px) scaleX(0.9315);color:#757575;">SENSITIVE DATA</span>
<span class="t" style="left:35px;top:192.80px;font-size:13px;letter-spacing:-0.17px;transform:translateX(0.73px) scaleX(0.9898);color:#424242;">Scan Type</span>
<span class="t" style="left:138px;top:192.80px;font-size:13px;transform:translateX(0.16px) scaleX(0.9796);color:#424242;">Scan Name</span>
<span class="t" style="left:361px;top:186.20px;font-size:13px;transform:translateX(0.65px) scaleX(1.0245);color:#424242;">Priority</span>
<span class="t" style="left:339px;top:199.20px;font-size:13px;transform:translateX(0.71px) scaleX(0.9954);color:#424242;">(Weighting)</span>
<span class="t" style="left:445px;top:192.80px;font-size:13px;transform:translateX(0.15px) scaleX(0.9974);color:#424242;">Date/Time Discovered</span>
<span class="t" style="left:638px;top:192.80px;font-size:13px;transform:translateX(0.81px) scaleX(0.9971);color:#424242;">Date/Time Most Recent</span>
<span class="t" style="left:832px;top:192.80px;font-size:13px;transform:translateX(0.36px) scaleX(0.9993);color:#424242;">Playbook(s)</span>
<span class="t" style="left:985px;top:192.80px;font-size:13px;transform:translateX(0.83px) scaleX(0.9870);color:#424242;">Playbook Status</span>
<span class="t" style="left:1119px;top:192.80px;font-size:13px;transform:translateX(0.66px) scaleX(0.9856);color:#424242;">Data Type(s)</span>
<span class="t" style="left:1233px;top:192.80px;font-size:13px;transform:translateX(0.59px) scaleX(1.0167);color:#424242;">Classification(s)</span>
<span class="t" style="left:1366px;top:192.80px;font-size:13px;transform:translateX(0.71px) scaleX(1.0320);color:#424242;">Location</span>
<span class="t" style="left:163px;top:238.22px;font-size:11.5px;transform:translateX(0.35px) scaleX(0.9817);">Demo Scan 3/25</span>
<span class="t" style="left:375px;top:239.22px;font-size:11.5px;transform:translateX(0.80px) scaleX(0.9924);">10</span>
<span class="t" style="left:445px;top:239.22px;font-size:11.5px;transform:translateX(0.72px) scaleX(1.0045);">03/31/2025 12:07:22</span>
<span class="t" style="left:638px;top:239.22px;font-size:11.5px;transform:translateX(0.78px) scaleX(1.0080);">10/08/2025 10:01:26</span>
<span class="t" style="left:835px;top:240.22px;font-size:11.5px;transform:translateX(0.79px) scaleX(0.9857);color:#1472b4;">Demo Playbook 3/25</span>
<span class="t" style="left:986px;top:239.22px;font-size:11.5px;transform:translateX(0.16px) scaleX(0.9858);">Complete</span>
<span class="t" style="left:1145px;top:238.22px;font-size:11.5px;transform:translateX(0.00px) scaleX(1.0000);">1</span>
<span class="t" style="left:1233px;top:239.22px;font-size:11.5px;transform:translateX(0.33px) scaleX(1.0001);">Low</span>
<span class="t" style="left:1386px;top:239.22px;font-size:11.5px;transform:translateX(0.73px) scaleX(0.9863);">C:\Desktop Data 3\certkey.txt</span>
<span class="t" style="left:163px;top:285.22px;font-size:11.5px;transform:translateX(0.35px) scaleX(0.9817);">Demo Scan 3/25</span>
<span class="t" style="left:379px;top:286.22px;font-size:11.5px;transform:translateX(0.04px) scaleX(1.0000);">4</span>
<span class="t" style="left:445px;top:286.22px;font-size:11.5px;transform:translateX(0.72px) scaleX(1.0045);">03/31/2025 12:07:22</span>
<span class="t" style="left:638px;top:286.22px;font-size:11.5px;transform:translateX(0.78px) scaleX(1.0079);">10/08/2025 10:01:25</span>
<span class="t" style="left:835px;top:286.22px;font-size:11.5px;transform:translateX(0.79px) scaleX(0.9857);color:#1472b4;">Demo Playbook 3/25</span>
<span class="t" style="left:986px;top:286.22px;font-size:11.5px;transform:translateX(0.16px) scaleX(0.9858);">Complete</span>
<span class="t" style="left:1145px;top:285.22px;font-size:11.5px;transform:translateX(0.41px) scaleX(1.0000);">3</span>
<span class="t" style="left:1233px;top:286.22px;font-size:11.5px;transform:translateX(0.33px) scaleX(1.0001);">Low</span>
<span class="t" style="left:1386px;top:285.22px;font-size:11.5px;transform:translateX(0.66px) scaleX(0.9765);">C:\Desktop Data 3\Call Summary Log.txt</span>
<span class="t" style="left:163px;top:331.22px;font-size:11.5px;transform:translateX(0.35px) scaleX(0.9817);">Demo Scan 3/25</span>
<span class="t" style="left:378px;top:332.22px;font-size:11.5px;transform:translateX(0.68px) scaleX(1.0000);">7</span>
<span class="t" style="left:445px;top:332.22px;font-size:11.5px;transform:translateX(0.72px) scaleX(1.0045);">03/31/2025 12:07:22</span>
<span class="t" style="left:638px;top:332.22px;font-size:11.5px;transform:translateX(0.78px) scaleX(1.0079);">10/08/2025 09:57:35</span>
<span class="t" style="left:835px;top:332.22px;font-size:11.5px;transform:translateX(0.79px) scaleX(0.9857);color:#1472b4;">Demo Playbook 3/25</span>
<span class="t" style="left:986px;top:332.22px;font-size:11.5px;transform:translateX(0.16px) scaleX(0.9858);">Complete</span>
<span class="t" style="left:1145px;top:331.22px;font-size:11.5px;transform:translateX(0.55px) scaleX(1.0000);">6</span>
<span class="t" style="left:1233px;top:332.22px;font-size:11.5px;letter-spacing:-0.18px;transform:translateX(0.22px) scaleX(0.9697);">PCI Regulated Data</span>
<span class="t" style="left:1386px;top:332.22px;font-size:11.5px;transform:translateX(0.75px) scaleX(0.9697);">C:\Desktop Data 3\DL-App_Patterson.pdf</span>
<span class="t" style="left:163px;top:377.22px;font-size:11.5px;transform:translateX(0.35px) scaleX(0.9817);">Demo Scan 3/25</span>
<span class="t" style="left:371px;top:378.22px;font-size:11.5px;transform:translateX(0.54px) scaleX(1.0924);">N/A</span>
<span class="t" style="left:445px;top:378.22px;font-size:11.5px;transform:translateX(0.72px) scaleX(1.0045);">03/31/2025 12:07:22</span>
<span class="t" style="left:638px;top:378.22px;font-size:11.5px;transform:translateX(0.78px) scaleX(1.0079);">10/08/2025 09:57:35</span>
<span class="t" style="left:835px;top:379.22px;font-size:11.5px;transform:translateX(0.79px) scaleX(0.9857);color:#1472b4;">Demo Playbook 3/25</span>
<span class="t" style="left:986px;top:378.22px;font-size:11.5px;transform:translateX(0.16px) scaleX(0.9858);">Complete</span>
<span class="t" style="left:1145px;top:377.22px;font-size:11.5px;transform:translateX(0.57px) scaleX(1.0000);">2</span>
<span class="t" style="left:1233px;top:378.22px;font-size:11.5px;transform:translateX(0.44px) scaleX(0.9835);">ePHI</span>
<span class="t" style="left:1386px;top:378.22px;font-size:11.5px;transform:translateX(0.75px) scaleX(0.9663);">C:\Desktop Data 3\Employee Database.accdb [Sheet1]</span>
<span class="t" style="left:163px;top:424.22px;font-size:11.5px;transform:translateX(0.35px) scaleX(0.9817);">Demo Scan 3/25</span>
<span class="t" style="left:371px;top:425.22px;font-size:11.5px;transform:translateX(0.54px) scaleX(1.0924);">N/A</span>
<span class="t" style="left:445px;top:425.22px;font-size:11.5px;transform:translateX(0.72px) scaleX(1.0045);">03/31/2025 12:07:22</span>
<span class="t" style="left:638px;top:425.22px;font-size:11.5px;transform:translateX(0.78px) scaleX(1.0079);">10/08/2025 09:57:35</span>
<span class="t" style="left:835px;top:425.22px;font-size:11.5px;transform:translateX(0.79px) scaleX(0.9857);color:#1472b4;">Demo Playbook 3/25</span>
<span class="t" style="left:986px;top:425.22px;font-size:11.5px;transform:translateX(0.16px) scaleX(0.9858);">Complete</span>
<span class="t" style="left:1145px;top:424.22px;font-size:11.5px;transform:translateX(0.41px) scaleX(1.0000);">3</span>
<span class="t" style="left:1233px;top:425.22px;font-size:11.5px;transform:translateX(0.44px) scaleX(0.9835);">ePHI</span>
<span class="t" style="left:1386px;top:424.22px;font-size:11.5px;transform:translateX(0.75px) scaleX(0.9610);">C:\Desktop Data 3\Foreign-Individual-Information-Reque…</span>
<span class="t" style="left:163px;top:470.22px;font-size:11.5px;transform:translateX(0.35px) scaleX(0.9817);">Demo Scan 3/25</span>
<span class="t" style="left:378px;top:471.22px;font-size:11.5px;transform:translateX(0.79px) scaleX(1.0000);">3</span>
<span class="t" style="left:445px;top:471.22px;font-size:11.5px;transform:translateX(0.72px) scaleX(1.0045);">03/31/2025 12:07:22</span>
<span class="t" style="left:638px;top:471.22px;font-size:11.5px;transform:translateX(0.78px) scaleX(1.0079);">10/08/2025 09:57:35</span>
<span class="t" style="left:835px;top:471.22px;font-size:11.5px;transform:translateX(0.79px) scaleX(0.9857);color:#1472b4;">Demo Playbook 3/25</span>
<span class="t" style="left:986px;top:471.22px;font-size:11.5px;transform:translateX(0.16px) scaleX(0.9858);">Complete</span>
<span class="t" style="left:1145px;top:470.22px;font-size:11.5px;transform:translateX(0.41px) scaleX(1.0000);">3</span>
<span class="t" style="left:1233px;top:471.22px;font-size:11.5px;transform:translateX(0.59px) scaleX(0.9071);">CCPA</span>
<span class="t" style="left:1386px;top:471.22px;font-size:11.5px;transform:translateX(0.74px) scaleX(0.9713);">C:\Desktop Data 3\georgia-driver-license_550.jpg</span>
<span class="t" style="left:163px;top:516.22px;font-size:11.5px;transform:translateX(0.35px) scaleX(0.9817);">Demo Scan 3/25</span>
<span class="t" style="left:371px;top:517.22px;font-size:11.5px;transform:translateX(0.54px) scaleX(1.0924);">N/A</span>
<span class="t" style="left:445px;top:517.22px;font-size:11.5px;transform:translateX(0.72px) scaleX(1.0045);">03/31/2025 12:07:22</span>
<span class="t" style="left:638px;top:517.22px;font-size:11.5px;transform:translateX(0.78px) scaleX(1.0079);">10/08/2025 09:57:35</span>
<span class="t" style="left:835px;top:518.22px;font-size:11.5px;transform:translateX(0.79px) scaleX(0.9857);color:#1472b4;">Demo Playbook 3/25</span>
<span class="t" style="left:986px;top:517.22px;font-size:11.5px;transform:translateX(0.16px) scaleX(0.9858);">Complete</span>
<span class="t" style="left:1145px;top:516.22px;font-size:11.5px;transform:translateX(0.41px) scaleX(1.0000);">3</span>
<span class="t" style="left:1233px;top:517.22px;font-size:11.5px;transform:translateX(0.44px) scaleX(0.9835);">ePHI</span>
<span class="t" style="left:1386px;top:517.22px;font-size:11.5px;transform:translateX(0.76px) scaleX(0.9558);">C:\Desktop Data 3\Gift-Prize-or-Award-Form-2024-new.p…</span>
<span class="t" style="left:163px;top:563.22px;font-size:11.5px;transform:translateX(0.35px) scaleX(0.9817);">Demo Scan 3/25</span>
<span class="t" style="left:371px;top:564.22px;font-size:11.5px;transform:translateX(0.54px) scaleX(1.0924);">N/A</span>
<span class="t" style="left:445px;top:564.22px;font-size:11.5px;transform:translateX(0.72px) scaleX(1.0045);">03/31/2025 12:07:22</span>
<span class="t" style="left:638px;top:564.22px;font-size:11.5px;transform:translateX(0.78px) scaleX(1.0079);">10/08/2025 09:57:35</span>
<span class="t" style="left:835px;top:564.22px;font-size:11.5px;transform:translateX(0.79px) scaleX(0.9857);color:#1472b4;">Demo Playbook 3/25</span>
<span class="t" style="left:986px;top:564.22px;font-size:11.5px;transform:translateX(0.16px) scaleX(0.9858);">Complete</span>
<span class="t" style="left:1145px;top:563.22px;font-size:11.5px;transform:translateX(0.57px) scaleX(1.0000);">2</span>
<span class="t" style="left:1233px;top:564.22px;font-size:11.5px;transform:translateX(0.44px) scaleX(0.9835);">ePHI</span>
<span class="t" style="left:1386px;top:564.22px;font-size:11.5px;transform:translateX(0.67px) scaleX(0.9776);">C:\Desktop Data 3\Hidden Data.pptx</span>
<span class="t" style="left:163px;top:609.22px;font-size:11.5px;transform:translateX(0.35px) scaleX(0.9817);">Demo Scan 3/25</span>
<span class="t" style="left:371px;top:610.22px;font-size:11.5px;transform:translateX(0.54px) scaleX(1.0924);">N/A</span>
<span class="t" style="left:445px;top:610.22px;font-size:11.5px;transform:translateX(0.72px) scaleX(1.0045);">03/31/2025 12:07:22</span>
<span class="t" style="left:638px;top:610.22px;font-size:11.5px;transform:translateX(0.78px) scaleX(1.0079);">10/08/2025 09:57:35</span>
<span class="t" style="left:835px;top:611.22px;font-size:11.5px;transform:translateX(0.79px) scaleX(0.9857);color:#1472b4;">Demo Playbook 3/25</span>
<span class="t" style="left:986px;top:610.22px;font-size:11.5px;transform:translateX(0.16px) scaleX(0.9858);">Complete</span>
<span class="t" style="left:1145px;top:609.22px;font-size:11.5px;transform:translateX(0.00px) scaleX(1.0000);">1</span>
<span class="t" style="left:1233px;top:610.22px;font-size:11.5px;transform:translateX(0.44px) scaleX(0.9835);">ePHI</span>
<span class="t" style="left:1386px;top:610.22px;font-size:11.5px;transform:translateX(0.74px) scaleX(0.9738);">C:\Desktop Data 3\Hidden Sheet.xlsx</span>
<span class="t" style="left:163px;top:656.22px;font-size:11.5px;transform:translateX(0.35px) scaleX(0.9817);">Demo Scan 3/25</span>
<span class="t" style="left:379px;top:657.22px;font-size:11.5px;transform:translateX(0.04px) scaleX(1.0000);">4</span>
<span class="t" style="left:445px;top:657.22px;font-size:11.5px;transform:translateX(0.72px) scaleX(1.0045);">03/31/2025 12:07:22</span>
<span class="t" style="left:638px;top:657.22px;font-size:11.5px;transform:translateX(0.78px) scaleX(1.0079);">10/08/2025 09:57:35</span>
<span class="t" style="left:835px;top:657.22px;font-size:11.5px;transform:translateX(0.79px) scaleX(0.9857);color:#1472b4;">Demo Playbook 3/25</span>
<span class="t" style="left:986px;top:657.22px;font-size:11.5px;transform:translateX(0.16px) scaleX(0.9858);">Complete</span>
<span class="t" style="left:1145px;top:656.22px;font-size:11.5px;transform:translateX(0.41px) scaleX(1.0000);">3</span>
<span class="t" style="left:1233px;top:657.22px;font-size:11.5px;transform:translateX(0.56px) scaleX(0.9629);">Government Form</span>
<span class="t" style="left:1386px;top:656.22px;font-size:11.5px;transform:translateX(0.67px) scaleX(0.9836);">C:\Desktop Data 3\i-9.pdf</span>
<span class="t" style="left:163px;top:702.22px;font-size:11.5px;transform:translateX(0.35px) scaleX(0.9817);">Demo Scan 3/25</span>
<span class="t" style="left:379px;top:703.22px;font-size:11.5px;transform:translateX(0.65px) scaleX(1.0000);">1</span>
<span class="t" style="left:445px;top:703.22px;font-size:11.5px;transform:translateX(0.72px) scaleX(1.0045);">03/31/2025 12:07:22</span>
<span class="t" style="left:638px;top:703.22px;font-size:11.5px;transform:translateX(0.78px) scaleX(1.0079);">10/08/2025 09:57:35</span>
<span class="t" style="left:835px;top:703.22px;font-size:11.5px;transform:translateX(0.79px) scaleX(0.9857);color:#1472b4;">Demo Playbook 3/25</span>
<span class="t" style="left:986px;top:703.22px;font-size:11.5px;transform:translateX(0.16px) scaleX(0.9858);">Complete</span>
<span class="t" style="left:1145px;top:702.22px;font-size:11.5px;transform:translateX(0.00px) scaleX(1.0000);">1</span>
<span class="t" style="left:1233px;top:703.22px;font-size:11.5px;transform:translateX(0.59px) scaleX(0.9071);">CCPA</span>
<span class="t" style="left:1386px;top:703.22px;font-size:11.5px;transform:translateX(0.74px) scaleX(0.9727);">C:\Desktop Data 3\Indonesian_passport_data_page2.jpg</span>
<span class="t" style="left:46px;top:777.60px;font-size:13px;transform:translateX(0.97px) scaleX(0.9855);">Items per Page:</span>
<span class="t" style="left:152px;top:777.60px;font-size:13px;transform:translateX(0.01px) scaleX(1.0214);color:#333333;">100</span>
<span class="t" style="left:229px;top:777.60px;font-size:13px;transform:translateX(0.04px) scaleX(0.9781);">Displaying 1-100 of</span>
<span class="t ns" style="left:341px;top:777.60px;font-size:13px;transform:translateX(0.62px) scaleX(0.9848);font-weight:700;">1,166,025 Items</span>
<span class="t med" style="left:1426px;top:778.12px;font-size:11.5px;transform:translateX(0.98px) scaleX(1.0000);color:#ffffff;">1</span>
<span class="t med" style="left:1458px;top:778.12px;font-size:11.5px;transform:translateX(0.59px) scaleX(1.0000);color:#1472b4;">2</span>
<span class="t med" style="left:1490px;top:778.12px;font-size:11.5px;transform:translateX(0.45px) scaleX(1.0000);color:#1472b4;">3</span>
<span class="t med" style="left:1522px;top:778.12px;font-size:11.5px;transform:translateX(0.84px) scaleX(1.0000);color:#1472b4;">4</span>
<span class="t med" style="left:1554px;top:778.12px;font-size:11.5px;transform:translateX(0.59px) scaleX(1.0000);color:#1472b4;">5</span>
<span class="t med" style="left:1586px;top:778.12px;font-size:11.5px;transform:translateX(0.59px) scaleX(1.0000);color:#1472b4;">6</span>
<span class="t med" style="left:1617px;top:778.12px;font-size:11.5px;transform:translateX(0.18px) scaleX(1.0065);color:#1472b4;">...</span>
<span class="t med" style="left:1643px;top:778.12px;font-size:11.5px;transform:translateX(0.93px) scaleX(1.0260);color:#1472b4;">11661</span>
</div>
</body></html>
